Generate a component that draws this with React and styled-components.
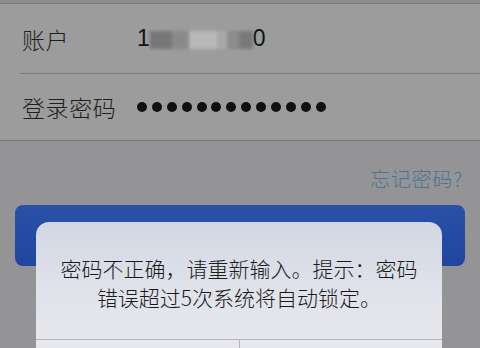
import React from 'react';
import styled, { createGlobalStyle } from 'styled-components';

const GlobalStyle = createGlobalStyle`
  html, body {
    margin: 0;
    padding: 0;
    width: 480px;
    height: 348px;
    overflow: hidden;
    background: #949497;
    font-family: "Noto Sans CJK SC", "Noto Sans", sans-serif;
  }
`;

const Screen = styled.div`
  position: relative;
  width: 480px;
  height: 348px;
  overflow: hidden;
  background: #949497;
`;

const TopEdge = styled.div`
  height: 3px;
  background: #8d8d90;
  border-bottom: 1px solid #7c7c7e;
`;

const Form = styled.div`
  background: #9c9c9c;
  border-bottom: 1px solid #76767a;
`;

const Row = styled.div`
  display: flex;
  align-items: center;
  height: ${p => p.h}px;
  padding-left: 22px;
`;

const Divider = styled.div`
  height: 1px;
  margin-left: 20px;
  background: #7a7a7a;
`;

const Label = styled.div`
  width: 115px;
  font-size: 23px;
  font-weight: 300;
  color: #1e1e1e;
  letter-spacing: 0.6px;
`;

const Value = styled.div`
  display: flex;
  align-items: center;
  font-family: "Liberation Sans", "Noto Sans", sans-serif;
  font-size: 23px;
  color: #111;
`;

const Blur = styled.div`
  display: flex;
  height: 18px;
  margin: 2px 0 0;
  filter: blur(1.5px);
`;

const Block = styled.div`
  width: ${p => p.w}px;
  background: ${p => p.c};
`;

const Dots = styled.div`
  display: flex;
  gap: 4.9px;
`;

const Dot = styled.span`
  width: 10px;
  height: 10px;
  border-radius: 50%;
  background: #111;
`;

const ForgotRow = styled.div`
  display: flex;
  justify-content: flex-end;
  padding: 23px 17px 0 0;
  height: 41px;
`;

const Forgot = styled.span`
  font-size: 20px;
  font-weight: 300;
  color: #4a7595;
  letter-spacing: 0.8px;
`;

const LoginButton = styled.div`
  margin: 0 15px;
  height: 61px;
  border-radius: 8px;
  background: linear-gradient(#2a51a6, #1f45a1);
`;

const Alert = styled.div`
  position: absolute;
  left: 36px;
  top: 222px;
  width: 406px;
  height: 160px;
  border-radius: 13px;
  background: linear-gradient(#d2d7e4 0%, #e2e4eb 50%, #ececef 100%);
  display: flex;
  flex-direction: column;
`;

const Message = styled.div`
  padding: 32px 20px 0;
  height: 85px;
  text-align: center;
  font-size: 21px;
  font-weight: 300;
  line-height: 29px;
  color: #1a1a1a;
`;

const Buttons = styled.div`
  display: flex;
  border-top: 1px solid #b4b4b8;
  flex: 1;
`;

const AlertButton = styled.div`
  flex: 1;
  border-left: ${p => (p.first ? 'none' : '1px solid #b4b4b8')};
`;

const App = () => {
  return (
    <Screen>
      <GlobalStyle />
      <TopEdge />
      <Form>
        <Row h={69}>
          <Label>账户</Label>
          <Value>
            1
            <Blur>
              <Block w={22} c="#777" />
              <Block w={17} c="#8a8a8a" />
              <Block w={28} c="#b8b8b8" />
              <Block w={10} c="#a8a8a8" />
              <Block w={12} c="#8c8c8c" />
              <Block w={14} c="#7a7a7a" />
            </Blur>
            0
          </Value>
        </Row>
        <Divider />
        <Row h={66}>
          <Label>登录密码</Label>
          <Dots>
            {Array.from({ length: 13 }).map((_, i) => (
              <Dot key={i} />
            ))}
          </Dots>
        </Row>
      </Form>
      <ForgotRow>
        <Forgot>忘记密码?</Forgot>
      </ForgotRow>
      <LoginButton />
      <Alert>
        <Message>
          密码不正确，请重新输入。提示：密码
          <br />
          错误超过5次系统将自动锁定。
        </Message>
        <Buttons>
          <AlertButton first />
          <AlertButton />
        </Buttons>
      </Alert>
    </Screen>
  );
};

export default App;
